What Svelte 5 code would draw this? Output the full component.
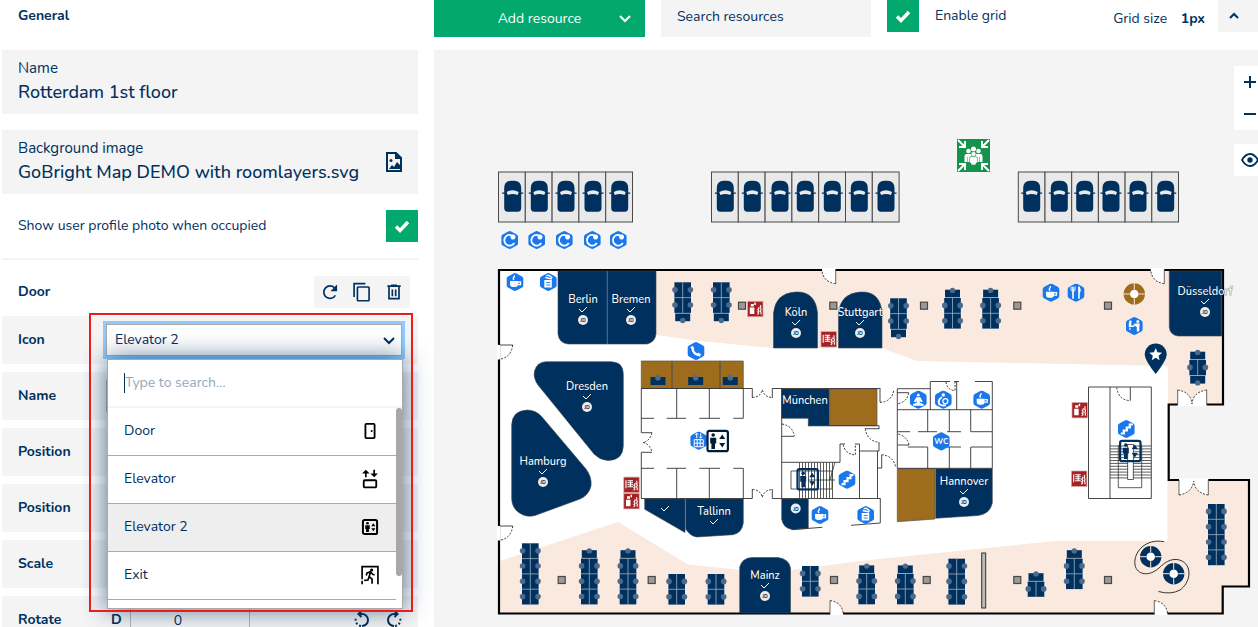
<script>
  const options = [
    { label: 'Door', icon: 'door' },
    { label: 'Elevator', icon: 'lift' },
    { label: 'Elevator 2', icon: 'elevator' },
    { label: 'Exit', icon: 'exit' }
  ];
  const hiddenRows = ['Name', 'Position', 'Position', 'Scale'];

  const parking = [
    { x: 498.5, n: 5, w: 26.8, cars: [512.7, 539.3, 566, 593, 619.7] },
    { x: 711.5, n: 7, w: 26.8, cars: [725.3, 752.3, 780, 805.3, 832.3, 859.3, 886] },
    { x: 1018.3, n: 6, w: 26.7, cars: [1031.7, 1059.3, 1084.7, 1111, 1138, 1165.7] }
  ];

  // centre x, top of the first full row, rows, desk above, desk below
  const desks = [
    [682.7, 282.3, 2, 0, 1], [721.3, 282.3, 2, 0, 1], [898.5, 298.3, 2, 0, 1],
    [952.5, 298, 2, 1, 0], [990.6, 298, 2, 1, 0], [1197.7, 360, 1, 1, 1],
    [530.3, 543.3, 4, 0, 0], [589.3, 558.5, 3, 1, 0], [628, 558.5, 3, 1, 0],
    [676.7, 574, 2, 0, 0], [716, 574, 2, 0, 0], [810.3, 566, 2, 0, 0],
    [866.7, 573.7, 2, 1, 0], [905.3, 573.7, 2, 1, 0], [956.7, 558.7, 3, 0, 0],
    [1036, 581.5, 1, 1, 0], [1074.3, 558.5, 2, 1, 0], [1216.3, 504, 4, 0, 0]
  ];
  const pillars = [
    [742, 305.7], [833.3, 305.7], [924, 305.7], [1017.3, 305.7], [1108, 305.7],
    [561.7, 580], [651.7, 580], [834, 580], [926.7, 580], [1017.3, 580], [1108, 580]
  ];
  const rooms = [
    ['Berlin', 583, 303, 1, 1], ['Bremen', 631, 303, 1, 1], ['Köln', 796, 316, 1, 1],
    ['Stuttgart', 860, 316, 1, 1], ['Düsseldorf', 1205, 295, 1, 1], ['Dresden', 587, 390, 1, 1],
    ['Hamburg', 543, 465, 1, 1], ['München', 805, 404, 0, 0], ['Tallinn', 714, 515, 1, 0],
    ['Hannover', 964, 485, 1, 1], ['Mainz', 765, 579, 1, 1]
  ];
  const badges = [
    ['ev', 509.7, 240], ['ev', 536.7, 240], ['ev', 564.3, 240], ['ev', 592.3, 240], ['ev', 618.3, 240],
    ['cup', 515, 282], ['print', 548.3, 282], ['phone', 696, 351], ['cup', 1051, 292.7],
    ['food', 1076, 292.7], ['meet', 1134.3, 326], ['lift', 698.7, 440.7], ['calm', 918.3, 399.7],
    ['baby', 943.3, 399.7], ['cup', 981.7, 399.7], ['wc', 941.3, 441.3], ['stairs', 847, 479.7],
    ['cup', 820, 515], ['print', 865.7, 515], ['stairs', 1126.3, 429]
  ];
  const fires = [[755.3, 309, 0], [828.7, 339.3, 1], [631.5, 484.8, 1], [631.5, 501.2, 0], [1079.7, 410.2, 0], [1079.2, 478.7, 1]];
  const rings = [[1134.3, 294, '#9d6c1c'], [1150.7, 556.7, '#00305e'], [1173.7, 573.7, '#00305e']];
  const range = (n) => Array.from({ length: n }, (_, i) => i);
</script>

{#snippet glyph(name)}
  <svg viewBox="0 0 24 24" width="20" height="20" aria-hidden="true">
    {#if name === 'door'}
      <rect x="6.5" y="3.5" width="11" height="17" rx="1" fill="none" stroke="#000" stroke-width="2.2" />
      <circle cx="14" cy="12" r="1.2" />
    {:else if name === 'lift'}
      <rect x="4.500" y="13.500" width="15" height="8.500" rx="1" fill="none" stroke="#000" stroke-width="2.200" />
      <path d="M7 10V3M17 1v7" fill="none" stroke="#000" stroke-width="2" />
      <path d="M2.500 5.500L7 1l4.500 4.500zM12.500 5.500L17 10l4.500-4.500z" />
    {:else if name === 'elevator'}
      <rect x="3.500" y="3.500" width="17" height="17" rx="2" fill="none" stroke="#000" stroke-width="2.400" />
      <circle cx="9" cy="7.500" r="1.600" />
      <path d="M6.300 10h5.400v4.500h-1V18H7.300v-3.500h-1zM13.500 11l2.500-3.500 2.500 3.500zM13.500 13.500h5L16 17z" />
    {:else}
      <path d="M2.500 17V2h19v21M2.500 19v4" fill="none" stroke="#000" stroke-width="2" />
      <circle cx="14" cy="6" r="1.900" />
      <path d="M7.500 12.500l1-3 4-1.500 2.500 3 2.500 1M12.500 8.500L11 14l3.500 3v5.500M11 14l-1.500 4-4.500.500" fill="none" stroke="#000" stroke-width="2" />
    {/if}
  </svg>
{/snippet}

{#snippet tick()}
  <svg viewBox="0 0 16 16" width="16" height="16" aria-hidden="true"><path d="M2 8.500l4 4L14 4" fill="none" stroke="#fff" stroke-width="3.400" /></svg>
{/snippet}

{#snippet panel(x, y, c)}
  <g transform="translate({x} {y})" fill={c}>
    <rect x="-10.200" y="-10.200" width="20.400" height="20.400" rx="2" fill="none" stroke={c} stroke-width="2.200" />
    <circle cx="-4.500" cy="-6" r="1.800" />
    <path d="M-7.500-3.200h6V2.500h-1.200V8h-3.600V2.500h-1.200zM1.500-2h6L4.500-6.500zM1.500 2h6L4.500 6.500z" />
  </g>
{/snippet}

<div class="page">
  <aside>
    <h2>General</h2>
    <div class="field">
      <label for="name">Name</label>
      <input id="name" type="text" value="Rotterdam 1st floor" />
    </div>
    <div class="field">
      <label for="bg">Background image</label>
      <input id="bg" type="text" value="GoBright Map DEMO with roomlayers.svg" readonly />
      <button class="pick" aria-label="Choose image">
        <svg viewBox="0 0 16 20" width="16" height="20"><path d="M1 1h9l5 5v13H1z" fill="none" stroke="#00305e" stroke-width="2" /><path d="M9 0v7h7z M3 17l3-4 2 2 3-5 3 3v4z" fill="#00305e" /><circle cx="5" cy="8.500" r="1.500" fill="#00305e" /></svg>
      </button>
    </div>
    <label class="photo"><span>Show user profile photo when occupied</span><span class="check"><input type="checkbox" checked />{@render tick()}</span></label>
    <hr />
    <div class="section">
      <h2>Door</h2>
      <div class="tools">
        <button aria-label="Reset"><svg viewBox="0 0 24 24" width="20" height="20"><path d="M18.500 16A7.500 7.500 0 1 1 17.800 7.300L20 9.500" fill="none" stroke="#00305e" stroke-width="2" /><path d="M20.500 3v8h-8z" fill="#00305e" /></svg></button>
        <button aria-label="Copy"><svg viewBox="0 0 24 24" width="20" height="20"><path d="M2.500 18V2H16" fill="none" stroke="#00305e" stroke-width="2" /><rect x="6.500" y="6" width="14" height="16.500" rx="1" fill="none" stroke="#00305e" stroke-width="2" /></svg></button>
        <button aria-label="Delete"><svg viewBox="0 0 24 24" width="20" height="20"><path d="M4 5h16M8.500 4h7M6 6v14h12V6M10 9v8M14 9v8" fill="none" stroke="#00305e" stroke-width="2" /></svg></button>
      </div>
    </div>
    <div class="rows">
      <div class="row">
        <label for="icon">Icon</label>
        <div class="picker">
          <select id="icon"><option>Elevator 2</option></select>
          <svg class="arrow" viewBox="0 0 12 8" width="12" height="8"><path d="M1 1l5 5 5-5" fill="none" stroke="#00305e" stroke-width="2" /></svg>
          <div class="menu">
            <div class="find"><i></i><input type="text" aria-label="Search icons" placeholder="Type to search..." /></div>
            <ul>
              {#each options as o}
                <li><button class:active={o.label === 'Elevator 2'}><span>{o.label}</span>{@render glyph(o.icon)}</button></li>
              {/each}
            </ul>
            <b class="thumb"></b>
          </div>
          <div class="mark"></div>
        </div>
      </div>
      {#each hiddenRows as label, i}
        <div class="row" class:axis={i > 0}><label for="row{i}">{label}</label><input id="row{i}" type="text" /></div>
      {/each}
      <div class="row">
        <label for="rot">Rotate</label>
        <div class="rotate">
          <strong>D</strong><input id="rot" type="text" value="0" />
          <button aria-label="Rotate left"><svg viewBox="0 0 16 16" width="16" height="16"><path d="M8 14a6 6 0 0 0 0-12H5M7.500-1L4.500 2l3 3" fill="none" stroke="#00305e" stroke-width="2" /><path d="M7 14A6 6 0 0 1 2 6" fill="none" stroke="#00305e" stroke-width="2" stroke-dasharray="2 2" /></svg></button>
          <button aria-label="Rotate right"><svg viewBox="0 0 16 16" width="16" height="16"><path d="M8 14A6 6 0 0 1 8 2h3M8.500-1l3 3-3 3" fill="none" stroke="#00305e" stroke-width="2" /><path d="M9 14a6 6 0 0 0 5-8" fill="none" stroke="#00305e" stroke-width="2" stroke-dasharray="2 2" /></svg></button>
        </div>
      </div>
    </div>
  </aside>

  <main>
    <header>
      <button class="add"><span>Add resource</span><svg viewBox="0 0 12 8" width="12" height="8"><path d="M1 1l5 5 5-5" fill="none" stroke="#fff" stroke-width="2" /></svg></button>
      <input class="search" type="text" aria-label="Search resources" placeholder="Search resources" />
      <label class="enable"><span class="check"><input type="checkbox" checked />{@render tick()}</span><span>Enable grid</span></label>
      <span class="size">Grid size <strong>1px</strong></span>
      <button class="up" aria-label="Increase grid size"><svg viewBox="0 0 12 8" width="12" height="8"><path d="M2 6l4-4 4 4" fill="none" stroke="#00305e" stroke-width="2" /></svg></button>
    </header>

    <div class="canvas">
      <svg class="map" viewBox="434 50 824 577" preserveAspectRatio="xMinYMin meet">
        <!-- parking -->
        {#each parking as p}
          {#each range(p.n) as i}
            <rect x={p.x + i * p.w} y="172" width={p.w} height="50" fill="#e9e9e9" stroke="#4a4a4a" />
          {/each}
          {#each p.cars as c}
            <path d="M{c - 8.500} 188q0-7 7-7.300h3q7 .3 7 7.300v20q0 3.700-3.500 3.700h-10q-3.500 0-3.500-3.700zM{c - 10.500} 192.500h21v1.300h-21z" fill="#00305e" />
            <path d="M{c - 6} 192q6-3.500 12 0l-1 3q-5-1.800-10 0z" fill="#e9e9e9" />
          {/each}
        {/each}
        <!-- assembly point -->
        <g transform="translate(957 139)">
          <rect width="33" height="33" fill="#15924b" />
          <g fill="none" stroke="#fff" stroke-width="2"><path d="M1 1l6 6M8 2v6H2M32 1l-6 6M25 2v6h6M1 32l6-6M2 25h6v6M32 32l-6-6M31 25h-6v6" /></g>
          <g fill="#fff"><circle cx="16.500" cy="10" r="2.500" /><circle cx="11.500" cy="12" r="2.300" /><circle cx="21.500" cy="12" r="2.300" /><path d="M7.500 17q0-2 2-2h4q3-4 6 0h4q2 0 2 2v6h-2.500V18h-.5v5H10.500v-5H10v5H7.500z" /></g>
          <g fill="#fff" stroke="#15924b" stroke-width=".6"><circle cx="16.500" cy="15" r="2.400" /><path d="M12.500 24v-4.500q0-2 2-2h4q2 0 2 2V24H19v2h-5v-2z" /></g>
        </g>
        <!-- building -->
        <path d="M499 270H1223V404.500H1168.700V480H1249V586.500H1222.700V613.500H499Z" fill="#fff" />
        <path d="M656 271H1222V404H1168V366L990 362.500L917 361L882 348H772L700 341L656 335ZM500 561L618 522L688 564.500L740 570H790L870 560L1055 541H1167.500V481H1248V586H1222V613H500Z" fill="#fae9de" />
        <path d="M499 270H1223V404.500H1168.700V480H1249V586.500H1222.700V613.500H499Z" fill="none" stroke="#000" stroke-width="2.200" />
        <!-- rooms -->
        <g fill="#00305e" stroke="#3a4653" stroke-width=".6">
          <path d="M558 271h98v63q-1 8-9 10h-79q-9-1-10-10z" />
          <path d="M607.300 271v73" stroke="#4d6780" stroke-width="1.200" />
          <path d="M773.500 348V313q2-20 22-21t22 21v35z" />
          <path d="M838.500 348V313q2-20 22-21t21.500 21v35z" />
          <path d="M1169.300 271h52.500v65H1178q-8-1-8.700-9z" />
          <path d="M546 361.700H611Q623.300 362 623.300 374V446Q623 460 608 460.500Q600 460 594 454L538 385Q533 378 534.500 371Q537 362 546 361.700" />
          <path d="M511.700 425Q512 411 527 410Q536 410 542 417L586 469Q592 477 591 486Q589 495 580 499L535 515.500Q526 518 518 512Q512 507 511.700 499Z" />
          <path d="M685.700 499H743.300V523Q742 533 733 534.700L697 537Q690 536 685.700 529ZM644.700 499H685V532.500L644.700 509.300Z" />
          <path d="M781.700 389H829.300V425.700H808.300V418.300H781.700ZM781.700 499H808.300V528.300L792 529.500Q783 528 781.700 519Z" />
          <path d="M935.700 468.700H992.300V503Q990 514 978 515.500L935.700 518.300Z" />
          <path d="M739.700 613V567Q742 558 752 557.500H778Q789 559 790.500 568V613Z" />
        </g>
        <g fill="#9d6c1c" stroke="#555"><path d="M641.300 361H672V388.500H641.300ZM672 361H720V388.500H672ZM720 361H743.300V388.500H720ZM829.700 389H877V425.700H829.700ZM897.300 468.700H935V519L897.300 521.700Z" stroke-width=".7" /></g>
        <!-- inner walls -->
        <path
          d="M641 388.500H752.300M772.300 388.500H880.500M641.300 388.500V432.700M641.300 452.300V498.500M676.700 388.500V418.300M709.300 388.500V418.300M743.300 388.500V418.300M641.300 418.300H654M666.700 418.300H686M699.300 418.300H720M733.300 418.300H743.300M641.300 432.700H652M641.300 452.300H652M676.700 468.300V498.500M709.300 468.300V498.500M743.300 468.300V498.500M641.300 468.300H654M666.700 468.300H686M699.300 468.300H720M733.300 468.300H743.300M641 498.500H752.300M772.300 498.500H880.500M752.300 388.500V398M772.300 388.500V398M752.300 489V498.500M772.300 489V498.500M781.700 388.500V498.500M781.700 462.300H840V444H845M855 444H859.500V498.500M859.500 451H879M877.500 451V468H882M879 425.700V429M879 442V451M877.500 468V498.500M808 425.700H879M880.300 498.500V523L851 525.300M791.700 529.700L822.300 527.300M897.300 388.700H930.300V381.500H950M954 381.500H959M975 381.500H992.300V468.300H897.300V388.700M930.300 388.700V409.700M956.700 381.500V409.700M897.300 409.700H992.300M927.700 409.700V431.700M949.300 409.700V431.700M970.700 409.700V431.700M927.700 447V468.300M949.300 447V468.300M970.700 447V468.300M897.300 431.700H910M918 431.700H937M947 431.700H961M971 431.700H992M908 447H927.700M942 447H961M971 447H992M880 389V402M897 392.700H908.700M898 445H909M881.700 455V468M865 428.700H879M781.700 436.300H794M1088.500 387H1151.300V498.500H1088.500ZM1110 387V498.500M1130.300 387V400.700M498 345H512.700M498 526H512.700"
          fill="none" stroke="#333" stroke-width=".9" />
        <!-- stairs -->
        <g fill="none" stroke="#333" stroke-width=".8">
          {#each range(12) as i}<path d="M{799.500 + i * 3} 462.500V498M1110 {446 + i * 2.900}H1151" />{/each}
          <path d="M791 471H832V489H791ZM808 480H835M835 462l-5 18M1118.300 445V487.700H1141.700V445" />
          <rect x="1127.700" y="444.500" width="5.600" height="35" fill="#fff" />
        </g>
        <!-- doors -->
        <g fill="#fff">
          <path d="M497 345h3v14.500h-3zM497 526h3v14.500h-3zM822 268h13.700v15.700Q823 282 822 270zM1150.700 268h13.600v15.700Q1152 282 1150.700 270zM830 615v-14.300q12 1 13.300 14.300zM1154.300 615v-14.300q12 1 13.300 14.300zM1177.700 406V390q13 2 14.500 13q1.500-11 14.500-13v16zM1179 478.500V495q13-2 14.700-13q1.500 11 14.600 13v-16.500z" />
        </g>
        <g fill="none" stroke="#444" stroke-width=".8"><path d="M835.700 269v14.700M1164.300 269v14.700M830 600.700v14M1154.300 600.700v14M1177.700 390v15M1206.700 390v15M1179 480v15M1208.300 480v15" /></g>
        <path
          d="M512.700 345Q511 358 499 359.300M512.700 526Q511 539 499 540.300M835.700 283.700Q823 282 822 270M1164.300 283.700Q1152 282 1150.700 270M830 600.700Q842 602 843.300 614M1154.300 600.700Q1166 602 1167.700 614M1177.700 390Q1191 392 1192 404Q1193 392 1206.700 390M1179 495Q1192 493 1193.700 481Q1195 493 1208.300 495M752.300 397.500Q761 397 762.300 389.500Q764 397 772.300 397.500M752.300 489.500Q761 490 762.300 497.500Q764 490 772.300 489.500M652 432.700Q650 441 643 442.500Q650 444 652 452.300M880 402.300Q892 402 894 389.300M908.700 392.700Q907 402 898 403.700M946 381.700Q947 390 955 390.700V382M909 445Q907 436 898 434M881.700 454.700Q894 456 895.700 467.700M865.300 428.700Q867 441 879 442.300M843.300 444.700Q845 454 855.300 455V444M782 424Q793 426 794.300 436.300M1116.700 387.300Q1118 400 1130.300 400.700"
          fill="none" stroke="#333" stroke-dasharray="2 1.500" />
        <path d="M1164 541.700C1146 538 1133 552 1135 565C1137 575 1149 577 1159 568C1166 561 1174 557 1182 561C1193 567 1190 583 1180 590Q1171 595 1158.500 591.500" fill="none" stroke="#333" />
        <rect x="981.700" y="553" width="4" height="55" fill="#bbb" stroke="#333" />
        {#each pillars as [x, y]}<rect x={x - 3.500} y={y - 3.500} width="7" height="7" fill="#999" stroke="#4a4744" stroke-width="1.200" />{/each}
        <!-- desks -->
        {#each desks as [x, y, n, top, bottom]}
          <rect x={x - 8.300} {y} width="16.600" height={n * 15.300} fill="#00305e" />
          <path d="M{x} {y}v{n * 15.300}{range(n - 1).map((i) => `M${x - 8.300} ${y + (i + 1) * 15.300}h16.600`).join('')}" stroke="#9fb0c0" stroke-width=".8" />
          {#each range(n) as i}
            <circle cx={x - 7.700} cy={y + 7.400 + i * 15.300} r="2.800" fill="#4a6b8e" />
            <circle cx={x + 7.700} cy={y + 7.400 + i * 15.300} r="2.800" fill="#4a6b8e" />
          {/each}
          {#if top}<rect x={x - 7.500} y={y - 8.300} width="15" height="7.700" fill="#00305e" /><circle cx={x} cy={y - 7.600} r="2.700" fill="#4a6b8e" />{/if}
          {#if bottom}<rect x={x - 7.500} y={y + n * 15.300 + .600} width="15" height="7.700" fill="#00305e" /><circle cx={x} cy={y + n * 15.300 + 7.600} r="2.700" fill="#4a6b8e" />{/if}
        {/each}
        {#each [658, 695.700, 730.300] as x}<rect x={x - 7.500} y="377" width="15" height="8" fill="#00305e" /><circle cx={x} cy="377.700" r="2.800" fill="#4a6b8e" />{/each}
        {#each rings as [x, y, c]}
          <circle cx={x} cy={y} r="7.500" fill="#fff" stroke={c} stroke-width="6.400" />
          <path d="M{x - 11} {y}h6.500M{x + 4.500} {y}h6.500M{x} {y - 11}v6.500M{x} {y + 4.500}v6.500" stroke="#fae9de" />
        {/each}
        <!-- fire equipment -->
        {#each fires as [x, y, hose]}
          <g transform="translate({x} {y})">
            <rect x="-7.700" y="-7.700" width="15.400" height="15.400" fill="#a52126" stroke="#d8a7a4" stroke-width=".7" />
            {#if hose}<path d="M-5.500-4.500v8M-4-4h5.500M-4-2h5.500M-4 0h5.500M-4 2h5.500M-1-4v6" stroke="#fff" stroke-width="1.100" fill="none" />{:else}<path d="M-5.500-1.500h4.500v6.500h-4.500zM-4.500-5H-1.500v2.500h-3zM-1-6.500h1.500v2.500H-1z" fill="#fff" />{/if}
            <path d="M2 5.500q2.500-1 .5-2.500 2-.5 0-2.500 1.500-.5 1-2.500M5.500 5.500q1-2-.5-3.500 1.500-1 0-3 1-1 0-3" fill="none" stroke="#fff" stroke-width="1.100" />
          </g>
        {/each}
        <!-- amenity badges -->
        {#each badges as [kind, x, y]}
          <g transform="translate({x} {y})">
            <path d="M-1.500-8.600q1.500-.7 3 0L7-5.600q1.300.7 1.300 2.200v6.800Q8.300 4.900 7 5.600L1.500 8.600q-1.500.7-3 0L-7 5.600q-1.300-.7-1.300-2.200v-6.800Q-8.300-4.900-7-5.600z" fill="#1a78ec" />
            <g fill="none" stroke="#fff" stroke-width="1.300">
              {#if kind === 'ev'}<path d="M4.500 3A5.300 5.300 0 1 1 1-5" stroke-width="1.900" /><path d="M.5-5.500h3.500q3 1.500 1 4.500-3 1.500-4-1z" fill="#fff" stroke="none" />
              {:else if kind === 'cup'}<path d="M-5-1H3v3q0 3-3 3h-2q-3 0-3-3z" fill="#fff" stroke="none" /><path d="M3 0h2.500v2.500H3M-1-2q-1.500-1.500 0-3 .8-.8 0-1.500" />
              {:else if kind === 'print'}<path d="M-4-2H3.500V5.500H-4z" fill="#fff" stroke="none" /><path d="M-3-4.500L3.500-3M-2-6.500h3L4-4" /><path d="M-2 .5h4M-2 3h4" stroke="#1a78ec" stroke-width=".9" />
              {:else if kind === 'phone'}<path d="M-3.500-4Q-3.500 3.500 4 4.500" stroke-width="2.200" /><path d="M-4.500-4.500l1.500 2.500M1.500 2.500l3 2" stroke-width="2.600" />
              {:else if kind === 'food'}<path d="M-3-6v12" stroke-width="1.600" /><path d="M-5-6v3q0 1.500 2 1.500t2-1.500v-3" stroke-width="1" /><path d="M3-6v12" stroke-width="1.600" /><path d="M3-6q2.500 3 .5 6.500z" fill="#fff" stroke-width=".8" />
              {:else if kind === 'meet'}<path d="M-5.500 1H0V-.5h-3V-3h-2.500zM-5 1.500h1.200V4H-5zM2-2.500h3.500L5 1v4.500H2.500V1L0-.5-1-2z" fill="#fff" stroke="none" /><circle cx="-4" cy="-4.200" r="1.400" fill="#fff" stroke="none" /><circle cx="3.500" cy="-4.500" r="1.500" fill="#fff" stroke="none" />
              {:else if kind === 'lift'}<path d="M-4.500-1H4.500V6H-4.500zM-1.500-1V6M1.500-1V6M-4.500 2.500h9M-2-2.500v-5M-3.500-6L-2-7.500-.5-6M2-7.500v5M.5-4L2-2.500 3.500-4" stroke-width="1" />
              {:else if kind === 'calm'}<circle cy="-4.500" r="1.400" fill="#fff" stroke="none" /><path d="M-2-2.500h4l2.500 4.500-2 .5L1.500.5V3l4 1.500-.5 1.500H-5l-.5-1.500 4-1.500V.5l-1 2-2-.5z" fill="#fff" stroke="none" />
              {:else if kind === 'baby'}<circle cy="-4.700" r="1.700" fill="#fff" stroke="none" /><path d="M-1.500-2.500q-4.500 3-2.500 7 3 2 6.500 1" stroke-width="1.900" /><circle cx="2" cy="1.500" r="2.500" />
              {:else if kind === 'stairs'}<path d="M-5.500 4.500h3v-3h3v-3h3v-3h3" stroke-width="2.200" />
              {/if}
            </g>
            {#if kind === 'wc'}<text class="wc" y="3">WC</text>{/if}
          </g>
        {/each}
        {@render panel(717.7, 441, '#001c33')}
        {@render panel(807.7, 479.300, '#00305e')}
        {@render panel(1130.300, 451, '#00305e')}
        <path d="M1155.700 374Q1144.700 360 1144.700 354.500a11 11 0 0 1 22 0Q1166.700 360 1155.700 374z" fill="#00305e" />
        <path d="M1155.700 348l1.800 4.300 4.600.4-3.500 3 1 4.500-3.900-2.400-3.900 2.400 1-4.500-3.500-3 4.600-.4z" fill="#fff" />
        <!-- room labels -->
        {#each rooms as [name, x, y, available, person]}
          <text class="room" {x} {y}>{name}</text>
          {#if available}<path d="M{x - 4} {y + 6}l3 3 5-5" fill="none" stroke="#fff" />{/if}
          {#if person}<circle cx={x} cy={y + 17} r="5" fill="#ececec" /><text class="jd" {x} y={y + 19}>JD</text>{/if}
        {/each}
        <path d="M661 508l3 3 5-5" fill="none" stroke="#fff" />
        <circle cx="795.700" cy="508.500" r="5" fill="#ececec" /><text class="jd" x="796" y="511">JD</text>
      </svg>

      <div class="zoom">
        <button aria-label="Zoom in"><svg viewBox="0 0 12 12" width="12" height="12"><path d="M6 0v12M0 6h12" stroke="#00305e" stroke-width="2" /></svg></button>
        <button aria-label="Zoom out"><svg viewBox="0 0 12 12" width="12" height="12"><path d="M0 6h12" stroke="#00305e" stroke-width="2" /></svg></button>
        <button class="eye" aria-label="Show layers"><svg viewBox="0 0 18 14" width="18" height="14"><path d="M1 7q3.500-6 8-6t8 6q-3.500 6-8 6T1 7z" fill="none" stroke="#00305e" stroke-width="1.800" /><circle cx="9" cy="7" r="2.700" fill="#00305e" /></svg></button>
      </div>
    </div>
  </main>
</div>

<style>
  :global(body) { margin: 0; background: #fff; }
  .page {
    display: flex; gap: 16px; height: 100vh; overflow: hidden;
    font: 14px/20px "Nunito", "Open Sans", "Noto Sans", sans-serif; color: #00305e;
  }
  .page * { box-sizing: border-box; }
  button, input, select { font: inherit; color: inherit; border: 0; background: none; padding: 0; margin: 0; outline: 0; border-radius: 0; min-width: 0; }
  button { display: flex; align-items: center; justify-content: center; cursor: pointer; }
  svg { display: block; flex: none; overflow: visible; }
  h2 { margin: 0; padding-left: 16px; font-size: 14px; line-height: 32px; font-weight: 700; }

  aside { flex: none; width: 418px; padding-left: 2px; display: flex; flex-direction: column; gap: 16px; }
  aside > * { flex: none; }
  aside > h2 { margin-bottom: 2px; }
  .field { display: grid; grid-template-columns: 1fr auto; align-items: center; background: #f4f4f4; padding: 8px 16px; }
  .field label { font-size: 15px; grid-row: 1; }
  .field input { font-size: 18px; font-weight: 500; line-height: 28px; height: 28px; grid-row: 2; grid-column: 1; width: 100%; }
  .pick { grid-row: 1 / 3; grid-column: 2; }
  .photo { display: flex; justify-content: space-between; align-items: center; padding-left: 16px; }
  .check { position: relative; display: grid; place-items: center; width: 32px; height: 32px; background: #02a86d; flex: none; }
  .check input { position: absolute; inset: 0; width: 100%; height: 100%; opacity: 0; }
  hr { width: 100%; height: 2px; margin: 0; border: 0; background: #f4f4f4; }
  .section { display: flex; justify-content: space-between; padding-right: 8px; margin-bottom: -8px; }
  .tools { display: flex; background: #f4f4f4; }
  .tools button { width: 32px; height: 32px; }

  .rows { display: flex; flex-direction: column; gap: 8px; }
  .row { display: flex; align-items: center; height: 48px; padding: 0 16px; background: #f4f4f4; }
  .row > label { width: 88px; flex: none; font-weight: 700; }
  .row > input { flex: 1; height: 32px; background: #fff; border: 1px solid #b5b5b5; }
  .axis > input { margin-left: 24px; }
  .picker { position: relative; flex: 1; z-index: 2; }
  select { appearance: none; display: block; width: 100%; height: 32px; padding: 0 8px; background: #fff; border: 1px solid #aaa; box-shadow: 0 0 0 3px #8dcaff; }
  .arrow { position: absolute; right: 7px; top: 13px; }
  .menu {
    position: absolute; top: 35px; left: 1px; width: 100%; height: 250px; overflow: hidden;
    background: #fff; border: 1px solid #aaa; z-index: 1;
  }
  .picker::after { content: ""; position: absolute; top: 35px; left: 1px; width: 100%; height: 250px; box-shadow: 0 0 24px rgba(0, 48, 94, .7); clip-path: inset(-24px -32px -32px -24px); z-index: 0; }
  .find { display: flex; align-items: center; height: 48px; padding: 0 16px; border-bottom: 2px solid #f4f4f4; }
  .find i { width: 1px; height: 20px; background: #00305e; }
  .find input { flex: 1; }
  .find input::placeholder { color: #93a8bd; opacity: 1; }
  ul { list-style: none; margin: 0 6px 0 0; padding: 0; }
  li { border-bottom: 1px solid #aaa; }
  li button { width: 100%; height: 47px; padding: 0 16px 2px; justify-content: space-between; }
  li button.active { background: #eee; }
  .thumb { position: absolute; right: 0; top: 48px; width: 6px; height: 168px; border-radius: 3px; background: #a8a8a8; }
  .mark { position: absolute; inset: -11px -11px auto -17px; height: 299px; border: 2px solid #ea1c1c; z-index: 3; }
  .rotate { flex: 1; display: flex; align-items: center; }
  .rotate strong { width: 24px; padding-left: 5px; }
  .rotate input { width: 120px; height: 32px; padding-right: 24px; text-align: center; border: 1px solid #b5b5b5; }
  .rotate button { width: 32px; height: 32px; }
  .rotate input + button { margin-left: auto; }
  .rotate button:last-child { margin-right: -8px; }

  main { flex: 1; min-width: 0; display: flex; flex-direction: column; overflow: hidden; }
  header { display: flex; height: 50px; align-items: flex-start; flex: none; }
  .add { width: 211px; height: 37px; background: #02a86d; color: #fff; padding: 0 14px 0 26px; }
  .add span { flex: 1; text-align: center; }
  .search { width: 210px; height: 37px; margin: 0 16px; padding: 0 16px 4px; background: #f4f4f4; }
  .search::placeholder { color: #00305e; opacity: 1; }
  .enable { display: flex; gap: 16px; align-items: center; }
  .size { margin-left: auto; line-height: 37px; }
  .size strong { margin: 0 13px 0 10px; }
  .up { width: 40px; height: 32px; padding-right: 8px; background: #f4f4f4; }

  .canvas { position: relative; flex: 1; background: #f4f4f4; overflow: hidden; }
  .map { width: 100%; }
  .zoom { position: absolute; top: 16px; right: -8px; }
  .zoom button { width: 32px; height: 32px; background: #fff; }
  .zoom .eye { margin-top: 14px; }
  .room { font-size: 11px; font-weight: 500; fill: #fff; text-anchor: middle; stroke: rgba(0, 32, 64, .5); stroke-width: 1px; paint-order: stroke; }
  .wc { font-size: 8px; font-weight: 700; fill: #fff; text-anchor: middle; }
  .jd { font-size: 5px; font-weight: 700; fill: #00305e; text-anchor: middle; }
</style>
